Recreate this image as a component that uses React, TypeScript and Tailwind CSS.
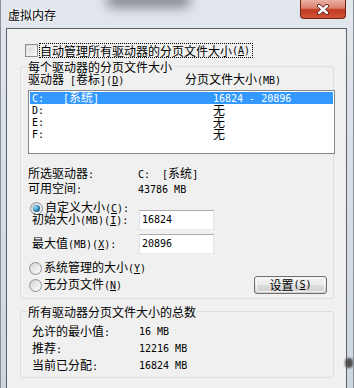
import React from "react";

function L({ children }: { children: React.ReactNode }) {
  return <span className="font-['DejaVu_Sans_Mono',monospace] text-[10px]">{children}</span>;
}
function U({ children }: { children: React.ReactNode }) {
  return <span className="underline underline-offset-[1px]">{children}</span>;
}

function Radio({ on }: { on?: boolean }) {
  return (
    <div className="w-[13px] h-[13px] rounded-full border border-[#8e9396] bg-[linear-gradient(135deg,#cfd1d3,#f7f7f7)] flex items-center justify-center shrink-0">
      {on ? (
        <div className="w-[7px] h-[7px] rounded-full bg-[radial-gradient(circle_at_35%_35%,#9fe0f5,#2a7fb0_55%,#0f3d5c)]" />
      ) : (
        <div className="w-[9px] h-[9px] rounded-full bg-[linear-gradient(135deg,#d8d8d8,#fbfbfb)]" />
      )}
    </div>
  );
}

function Input({ value }: { value: string }) {
  return (
    <div className="w-[75px] h-[20px] bg-white border border-t-[#abadb3] border-l-[#e2e3ea] border-r-[#e2e3ea] border-b-[#e3e9ef] flex items-center pl-[2px]">
      <L>{value}</L>
    </div>
  );
}

export default function App() {
  return (
    <div className="relative w-[354px] h-[388px] overflow-hidden flex flex-col bg-[linear-gradient(180deg,#e2e7ed,#cdd5de)] border-l border-r border-[#8a9199] font-['Noto_Sans_CJK_SC',sans-serif] text-[12px] leading-[14px] text-black whitespace-pre">
      {/* aero blur smudge */}
      <div className="absolute left-[105px] top-[-8px] w-[85px] h-[16px] bg-[#4a4f55] blur-[6px] opacity-60 rounded-full" />
      {/* title bar */}
      <div className="relative h-[28px] flex items-center pl-[7px] pt-[2px] shrink-0">
        <span className="[text-shadow:0_0_6px_#ffffff,0_0_3px_#ffffff]">虚拟内存</span>
      </div>
      {/* close button */}
      <div className="absolute top-0 right-[7px] w-[46px] h-[19px] rounded-b-[4px] border border-t-0 border-[#6e2418] bg-[linear-gradient(180deg,#eab1a4_0%,#d9806c_45%,#c23a22_55%,#d2543b_100%)] flex items-center justify-center">
        <svg width="14" height="11" viewBox="0 0 14 11">
          <path d="M3 2 L11 9 M11 2 L3 9" stroke="#5a1a10" strokeWidth="4" strokeLinecap="round" />
          <path d="M3 2 L11 9 M11 2 L3 9" stroke="#ffffff" strokeWidth="2.4" strokeLinecap="round" />
        </svg>
      </div>

      {/* client area */}
      <div className="ml-[5px] w-[341px] flex-1 border border-b-0 border-[#59626b] bg-[#f0f0f0] pl-[13px] flex flex-col">
        {/* checkbox row */}
        <div className="mt-[14px] ml-[5px] h-[15px] flex items-center">
          <div className="w-[13px] h-[13px] border border-[#8f8f8f] bg-[linear-gradient(135deg,#d2d2d2,#f8f8f8)] p-[1px] shrink-0">
            <div className="w-full h-full border border-[#f4f4f4] bg-[linear-gradient(135deg,#dcdcdc,#f3f3f3)]" />
          </div>
          <div className="ml-[1px] h-[15px] border border-dotted border-black flex items-center pl-[0px] pr-[2px]">
            自动管理所有驱动器的分页文件大小<L>(<U>A</U>)</L>
          </div>
        </div>

        {/* group 1 */}
        <div className="mt-[8px] w-[314px] border border-[#d5dfe5] rounded-[3px] flex flex-col">
          <div className="-mt-[7px] ml-[6px] w-fit bg-[#f0f0f0] px-[1px] leading-[14px]">每个驱动器的分页文件大小</div>
          <div className="ml-[7px] h-[12px] leading-[12px] flex items-center">
            <div className="w-[157px]">
              驱动器<L> [</L>卷标<L>](<U>D</U>)</L>
            </div>
            <div>
              分页文件大小<L>(MB)</L>
            </div>
          </div>
          {/* listbox */}
          <div className="mt-[4px] ml-[7px] w-[307px] h-[64px] border border-[#828790] bg-white p-[1px] flex flex-col">
            {[
              { d: "C:", l: true, v: "16824 - 20896", sel: true },
              { d: "D:", l: false, v: "无", sel: false },
              { d: "E:", l: false, v: "无", sel: false },
              { d: "F:", l: false, v: "无", sel: false },
            ].map((r) => (
              <div
                key={r.d}
                className={
                  r.sel
                    ? "h-[12px] leading-[12px] flex items-center pl-[2px] bg-[#3399ff] text-white"
                    : "h-[12px] leading-[12px] flex items-center pl-[2px]"
                }
              >
                <div className="w-[31px]">
                  <L>{r.d}</L>
                </div>
                <div className="w-[150px]">
                  {r.l ? (
                    <>
                      <L>[</L>系统<L>]</L>
                    </>
                  ) : null}
                </div>
                <div>{r.v === "无" ? "无" : <L>{r.v}</L>}</div>
              </div>
            ))}
          </div>

          {/* selected drive info */}
          <div className="mt-[12px] ml-[7px] h-[15px] flex items-center">
            <div className="w-[110px]">
              所选驱动器<L>:</L>
            </div>
            <div>
              <L>C:  [</L>系统<L>]</L>
            </div>
          </div>
          <div className="ml-[7px] h-[15px] flex items-center">
            <div className="w-[110px]">
              可用空间<L>:</L>
            </div>
            <div>
              <L>43786 MB</L>
            </div>
          </div>

          {/* custom size */}
          <div className="mt-[7px] ml-[9px] h-[10px] flex items-center">
            <Radio on />
            <span className="ml-[2px]">
              自定义大小<L>(<U>C</U>):</L>
            </span>
          </div>
          <div className="mt-[-3px] ml-[11px] h-[20px] flex items-center">
            <div className="w-[107px]">
              初始大小<L>(MB)(<U>I</U>):</L>
            </div>
            <Input value="16824" />
          </div>
          <div className="mt-[4px] ml-[11px] h-[20px] flex items-center">
            <div className="w-[107px]">
              最大值<L>(MB)(<U>X</U>):</L>
            </div>
            <Input value="20896" />
          </div>

          <div className="mt-[7px] ml-[8px] h-[14px] flex items-center">
            <Radio />
            <span className="ml-[2px]">
              系统管理的大小<L>(<U>Y</U>)</L>
            </span>
          </div>
          <div className="mt-[1px] ml-[8px] mr-[6px] h-[18px] flex items-center justify-between">
            <div className="flex items-center">
              <Radio />
              <span className="ml-[2px]">
                无分页文件<L>(<U>N</U>)</L>
              </span>
            </div>
            <div className="w-[73px] h-[18px] rounded-[3px] border border-[#707070] p-[1px] bg-[linear-gradient(180deg,#f2f2f2_0%,#ebebeb_50%,#dddddd_51%,#cfcfcf_100%)]">
              <div className="w-full h-full rounded-[2px] border border-[#fcfcfc]/70 flex items-center justify-center leading-[12px]">
                设置<L>(<U>S</U>)</L>
              </div>
            </div>
          </div>
          <div className="h-[4px]" />
        </div>

        {/* group 2 */}
        <div className="mt-[12px] w-[314px] border border-[#d5dfe5] rounded-[3px] flex flex-col">
          <div className="-mt-[7px] ml-[6px] w-fit bg-[#f0f0f0] px-[1px] leading-[14px]">所有驱动器分页文件大小的总数</div>
          <div className="mt-[4px] ml-[11px] h-[17px] flex items-center">
            <div className="w-[107px]">
              允许的最小值<L>:</L>
            </div>
            <L>16 MB</L>
          </div>
          <div className="ml-[11px] h-[17px] flex items-center">
            <div className="w-[107px]">
              推荐<L>:</L>
            </div>
            <L>12216 MB</L>
          </div>
          <div className="ml-[11px] h-[17px] flex items-center">
            <div className="w-[107px]">
              当前已分配<L>:</L>
            </div>
            <L>16824 MB</L>
          </div>
          <div className="h-[3px]" />
        </div>
      </div>

      {/* dark smudge on right frame */}
      <div className="absolute left-[344px] top-[358px] w-[8px] h-[10px] rounded-full bg-[#4d4d4d] blur-[1px]" />
    </div>
  );
}
